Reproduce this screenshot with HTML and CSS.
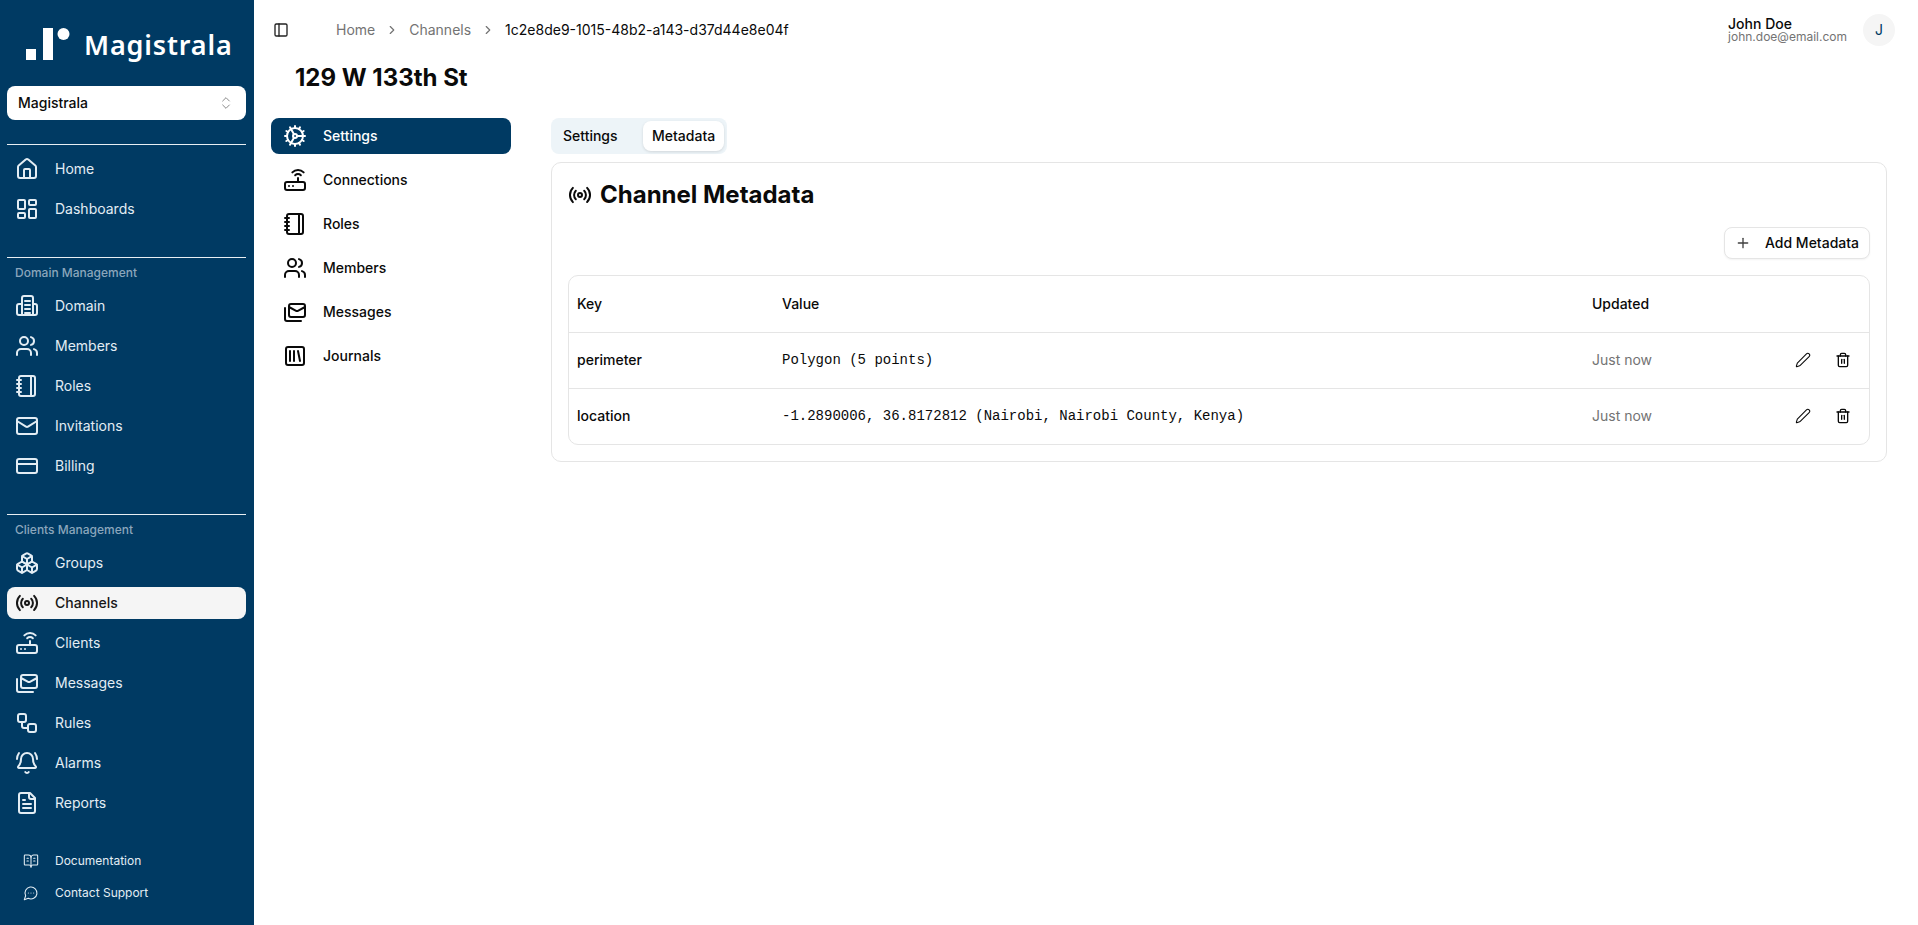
FILE: index.html
```html
<!DOCTYPE html>
<html lang="en">
<head>
<meta charset="utf-8">
<title>Magistrala</title>
<link rel="stylesheet" href="styles.css">
</head>
<body>
<svg class="sprite" aria-hidden="true">
  <symbol id="i-home" viewBox="0 0 24 24"><path d="M15 21v-8a1 1 0 0 0-1-1h-4a1 1 0 0 0-1 1v8"/><path d="M3 10a2 2 0 0 1 .709-1.528l7-5.999a2 2 0 0 1 2.582 0l7 5.999A2 2 0 0 1 21 10v9a2 2 0 0 1-2 2H5a2 2 0 0 1-2-2z"/></symbol>
  <symbol id="i-dash" viewBox="0 0 24 24"><rect width="7" height="9" x="3" y="3" rx="1"/><rect width="7" height="5" x="14" y="3" rx="1"/><rect width="7" height="9" x="14" y="12" rx="1"/><rect width="7" height="5" x="3" y="16" rx="1"/></symbol>
  <symbol id="i-domain" viewBox="0 0 24 24"><path d="M7 21V4a2 2 0 0 1 2-2h7a2 2 0 0 1 2 2v17"/><path d="M7 10H4a2 2 0 0 0-2 2v7a2 2 0 0 0 2 2h16a2 2 0 0 0 2-2v-7a2 2 0 0 0-2-2h-2"/><path d="M10 7h5M10 11h5M10 15h5M10 19h5"/></symbol>
  <symbol id="i-users" viewBox="0 0 24 24"><path d="M16 21v-2a4 4 0 0 0-4-4H6a4 4 0 0 0-4 4v2"/><circle cx="9" cy="7" r="4"/><path d="M22 21v-2a4 4 0 0 0-3-3.87"/><path d="M16 3.13a4 4 0 0 1 0 7.75"/></symbol>
  <symbol id="i-notebook" viewBox="0 0 24 24"><path d="M2 6h4"/><path d="M2 10h4"/><path d="M2 14h4"/><path d="M2 18h4"/><rect width="16" height="20" x="4" y="2" rx="2"/><path d="M16 2v20"/></symbol>
  <symbol id="i-mail" viewBox="0 0 24 24"><rect width="20" height="16" x="2" y="4" rx="2"/><path d="m22 7-8.97 5.7a1.94 1.94 0 0 1-2.06 0L2 7"/></symbol>
  <symbol id="i-card" viewBox="0 0 24 24"><rect width="20" height="14" x="2" y="5" rx="2"/><path d="M2 10h20"/></symbol>
  <symbol id="i-boxes" viewBox="0 0 24 24"><path d="M2.97 12.92A2 2 0 0 0 2 14.63v3.24a2 2 0 0 0 .97 1.71l3 1.8a2 2 0 0 0 2.06 0L12 19v-5.5l-5-3-4.03 2.42Z"/><path d="m7 16.5-4.74-2.85"/><path d="m7 16.5 5-3"/><path d="M7 16.5v5.17"/><path d="M12 13.5V19l3.97 2.38a2 2 0 0 0 2.06 0l3-1.8a2 2 0 0 0 .97-1.71v-3.24a2 2 0 0 0-.97-1.71L17 10.5l-5 3Z"/><path d="m17 16.5-5-3"/><path d="m17 16.5 4.74-2.85"/><path d="M17 16.5v5.17"/><path d="M7.97 4.42A2 2 0 0 0 7 6.13v4.37l5 3 5-3V6.13a2 2 0 0 0-.97-1.71l-3-1.8a2 2 0 0 0-2.06 0l-3 1.8Z"/><path d="M12 8 7.26 5.15"/><path d="m12 8 4.74-2.85"/><path d="M12 13.5V8"/></symbol>
  <symbol id="i-radio" viewBox="0 0 24 24"><path d="M4.9 19.1C1 15.2 1 8.8 4.9 4.9"/><path d="M7.8 16.2c-2.3-2.3-2.3-6.1 0-8.5"/><circle cx="12" cy="12" r="2"/><path d="M16.2 7.8c2.3 2.3 2.3 6.1 0 8.5"/><path d="M19.1 4.9C23 8.8 23 15.1 19.1 19"/></symbol>
  <symbol id="i-router" viewBox="0 0 24 24"><rect width="20" height="8" x="2" y="14" rx="2"/><path d="M6.01 18H6"/><path d="M10.01 18H10"/><path d="M15 10v4"/><path d="M17.84 7.17a4 4 0 0 0-5.66 0"/><path d="M20.66 4.34a8 8 0 0 0-11.31 0"/></symbol>
  <symbol id="i-mails" viewBox="0 0 24 24"><rect width="16" height="13" x="6" y="4" rx="2"/><path d="m22 7-7.1 3.78c-.57.3-1.23.3-1.8 0L6 7"/><path d="M2 8v11c0 1.1.9 2 2 2h14"/></symbol>
  <symbol id="i-flow" viewBox="0 0 24 24"><rect width="8" height="8" x="3" y="3" rx="2"/><path d="M7 11v4a2 2 0 0 0 2 2h4"/><rect width="8" height="8" x="13" y="13" rx="2"/></symbol>
  <symbol id="i-bell" viewBox="0 0 24 24"><path d="M10.268 21a2 2 0 0 0 3.464 0"/><path d="M22 8c0-2.3-.8-4.3-2-6"/><path d="M3.262 15.326A1 1 0 0 0 4 17h16a1 1 0 0 0 .74-1.673C19.41 13.956 18 12.499 18 8A6 6 0 0 0 6 8c0 4.499-1.411 5.956-2.738 7.326"/><path d="M4 2C2.8 3.7 2 5.7 2 8"/></symbol>
  <symbol id="i-file" viewBox="0 0 24 24"><path d="M15 2H6a2 2 0 0 0-2 2v16a2 2 0 0 0 2 2h12a2 2 0 0 0 2-2V7Z"/><path d="M14 2v4a2 2 0 0 0 2 2h4"/><path d="M10 9H8"/><path d="M16 13H8"/><path d="M16 17H8"/></symbol>
  <symbol id="i-book" viewBox="0 0 24 24"><path d="M12 7v14"/><path d="M16 12h2"/><path d="M16 8h2"/><path d="M3 18a1 1 0 0 1-1-1V4a1 1 0 0 1 1-1h5a4 4 0 0 1 4 4 4 4 0 0 1 4-4h5a1 1 0 0 1 1 1v13a1 1 0 0 1-1 1h-6a3 3 0 0 0-3 3 3 3 0 0 0-3-3z"/><path d="M6 12h2"/><path d="M6 8h2"/></symbol>
  <symbol id="i-chat" viewBox="0 0 24 24"><path d="M7.9 20A9 9 0 1 0 4 16.1L2 22Z"/><path d="M8 12h.01"/><path d="M12 12h.01"/><path d="M16 12h.01"/></symbol>
  <symbol id="i-cog" viewBox="0 0 24 24"><path d="M12 20a8 8 0 1 0 0-16 8 8 0 0 0 0 16Z"/><path d="M12 14a2 2 0 1 0 0-4 2 2 0 0 0 0 4Z"/><path d="M12 2v2"/><path d="M12 22v-2"/><path d="m17 20.66-1-1.73"/><path d="M11 10.27 7 3.34"/><path d="m20.66 17-1.73-1"/><path d="m3.34 7 1.73 1"/><path d="M14 12h8"/><path d="M2 12h2"/><path d="m20.66 7-1.73 1"/><path d="m3.34 17 1.73-1"/><path d="m17 3.34-1 1.73"/><path d="m11 13.73-4 6.93"/></symbol>
  <symbol id="i-lib" viewBox="0 0 24 24"><rect width="18" height="18" x="3" y="3" rx="2"/><path d="M7 7v10"/><path d="M11 7v10"/><path d="m15 7 2 10"/></symbol>
  <symbol id="i-panel" viewBox="0 0 24 24"><rect width="18" height="18" x="3" y="3" rx="2"/><path d="M9 3v18"/></symbol>
  <symbol id="i-chev" viewBox="0 0 24 24"><path d="m9 18 6-6-6-6"/></symbol>
  <symbol id="i-updown" viewBox="0 0 24 24"><path d="m7 15 5 5 5-5"/><path d="m7 9 5-5 5 5"/></symbol>
  <symbol id="i-plus" viewBox="0 0 24 24"><path d="M5 12h14"/><path d="M12 5v14"/></symbol>
  <symbol id="i-pencil" viewBox="0 0 24 24"><path d="M21.174 6.812a1 1 0 0 0-3.986-3.987L3.842 16.174a2 2 0 0 0-.5.83l-1.321 4.352a.5.5 0 0 0 .623.622l4.353-1.32a2 2 0 0 0 .83-.497z"/></symbol>
  <symbol id="i-trash" viewBox="0 0 24 24"><path d="M3 6h18"/><path d="M19 6v14c0 1-1 2-2 2H7c-1 0-2-1-2-2V6"/><path d="M8 6V4c0-1 1-2 2-2h4c1 0 2 1 2 2v2"/><path d="M10 11v6"/><path d="M14 11v6"/></symbol>
</svg>

<div class="app">
  <aside class="sidebar">
    <div class="logo">
      <svg class="logo-mark" viewBox="0 0 44 33"><rect x="0" y="21" width="10" height="11"/><rect x="17" y="0" width="10" height="32"/><circle cx="37.5" cy="6" r="6"/></svg>
      <span class="logo-text">Magistrala</span>
    </div>
    <div class="domain-select">
      <span>Magistrala</span>
      <svg class="ic ic-updown"><use href="#i-updown"/></svg>
    </div>
    <hr class="rule rule-first">
    <nav class="group">
      <a class="item"><svg class="ic"><use href="#i-home"/></svg>Home</a>
      <a class="item"><svg class="ic"><use href="#i-dash"/></svg>Dashboards</a>
    </nav>
    <hr class="rule rule-mid">
    <div class="label">Domain Management</div>
    <nav class="group">
      <a class="item"><svg class="ic"><use href="#i-domain"/></svg>Domain</a>
      <a class="item"><svg class="ic"><use href="#i-users"/></svg>Members</a>
      <a class="item"><svg class="ic"><use href="#i-notebook"/></svg>Roles</a>
      <a class="item"><svg class="ic"><use href="#i-mail"/></svg>Invitations</a>
      <a class="item"><svg class="ic"><use href="#i-card"/></svg>Billing</a>
    </nav>
    <hr class="rule rule-mid">
    <div class="label">Clients Management</div>
    <nav class="group">
      <a class="item"><svg class="ic"><use href="#i-boxes"/></svg>Groups</a>
      <a class="item active"><svg class="ic"><use href="#i-radio"/></svg>Channels</a>
      <a class="item"><svg class="ic"><use href="#i-router"/></svg>Clients</a>
      <a class="item"><svg class="ic"><use href="#i-mails"/></svg>Messages</a>
      <a class="item"><svg class="ic"><use href="#i-flow"/></svg>Rules</a>
      <a class="item"><svg class="ic"><use href="#i-bell"/></svg>Alarms</a>
      <a class="item"><svg class="ic"><use href="#i-file"/></svg>Reports</a>
    </nav>
    <nav class="foot">
      <a class="foot-item"><svg class="ic-sm"><use href="#i-book"/></svg>Documentation</a>
      <a class="foot-item"><svg class="ic-sm"><use href="#i-chat"/></svg>Contact Support</a>
    </nav>
  </aside>

  <div class="main">
    <header class="topbar">
      <svg class="ic-panel"><use href="#i-panel"/></svg>
      <ol class="crumbs">
        <li class="crumb-link">Home</li>
        <li class="crumb-sep"><svg class="ic-chev"><use href="#i-chev"/></svg></li>
        <li class="crumb-link">Channels</li>
        <li class="crumb-sep"><svg class="ic-chev"><use href="#i-chev"/></svg></li>
        <li class="crumb-now">1c2e8de9-1015-48b2-a143-d37d44e8e04f</li>
      </ol>
      <div class="user">
        <div class="user-text">
          <div class="user-name">John Doe</div>
          <div class="user-mail">john.doe@email.com</div>
        </div>
        <div class="avatar">J</div>
      </div>
    </header>
    <h1 class="page-title">129 W 133th St</h1>
    <div class="content">
      <nav class="subnav">
        <a class="sub-item sub-active"><svg class="ic"><use href="#i-cog"/></svg>Settings</a>
        <a class="sub-item"><svg class="ic"><use href="#i-router"/></svg>Connections</a>
        <a class="sub-item"><svg class="ic"><use href="#i-notebook"/></svg>Roles</a>
        <a class="sub-item"><svg class="ic"><use href="#i-users"/></svg>Members</a>
        <a class="sub-item"><svg class="ic"><use href="#i-mails"/></svg>Messages</a>
        <a class="sub-item"><svg class="ic"><use href="#i-lib"/></svg>Journals</a>
      </nav>
      <section class="panel">
        <div class="tabs">
          <span class="tab tab-first">Settings</span>
          <span class="tab tab-on">Metadata</span>
        </div>
        <div class="card">
          <h2 class="card-title"><svg class="ic"><use href="#i-radio"/></svg>Channel Metadata</h2>
          <div class="card-actions">
            <button class="add-btn"><svg class="ic-plus"><use href="#i-plus"/></svg>Add Metadata</button>
          </div>
          <table class="meta">
            <thead>
              <tr><th class="c-key">Key</th><th class="c-val">Value</th><th class="c-upd">Updated</th><th class="c-act"></th></tr>
            </thead>
            <tbody>
              <tr>
                <td class="k">perimeter</td><td class="v">Polygon (5 points)</td><td class="u">Just now</td>
                <td class="a"><span class="acts"><svg class="ic-act ic-pen"><use href="#i-pencil"/></svg><svg class="ic-act"><use href="#i-trash"/></svg></span></td>
              </tr>
              <tr>
                <td class="k">location</td><td class="v">-1.2890006, 36.8172812 (Nairobi, Nairobi County, Kenya)</td><td class="u">Just now</td>
                <td class="a"><span class="acts"><svg class="ic-act ic-pen"><use href="#i-pencil"/></svg><svg class="ic-act"><use href="#i-trash"/></svg></span></td>
              </tr>
            </tbody>
          </table>
        </div>
      </section>
    </div>
  </div>
</div>
</body>
</html>
```
FILE: styles.css
```css
* { box-sizing: border-box; }
html, body { margin: 0; height: 100%; }
body { font-family: Inter, "Liberation Sans", sans-serif; font-size: 14px; line-height: 20px; color: #0a0a0a; background: #fff; overflow: hidden; }
.sprite { position: absolute; width: 0; height: 0; overflow: hidden; }
.ic, .ic-sm, .ic-panel, .ic-chev, .ic-plus, .ic-act {
  fill: none; stroke: currentColor; stroke-width: 2; stroke-linecap: round; stroke-linejoin: round; flex: none;
}
.ic { width: 24px; height: 24px; }

.app { display: flex; height: 925px; }

.sidebar { width: 254px; flex: none; background: #003a63; color: #e8f0f6; padding: 0 8px 0 7px; display: flex; flex-direction: column; }
.logo { display: flex; align-items: center; height: 86px; padding: 28px 0 25px 19px; gap: 14px; flex: none; }
.logo-mark { width: 44px; height: 33px; fill: #fff; flex: none; }
.logo-text { font-family: "Noto Sans", sans-serif; font-weight: 600; font-size: 27px; letter-spacing: .85px; color: #fff; line-height: 33px; }
.domain-select { height: 34px; background: #fff; border-radius: 8px; color: #0a0a0a; display: flex; align-items: center; justify-content: space-between; padding: 0 12px 0 11px; font-weight: 500; flex: none; }
.ic-updown { width: 16px; height: 16px; color: #8a8a8a; stroke-width: 1.5; }
.rule { border: 0; height: 1px; background: #e8eef3; margin: 0; flex: none; }
.rule-first { margin-top: 24px; margin-bottom: 8px; }
.rule-mid { margin-top: 32px; }
.group { display: flex; flex-direction: column; gap: 8px; flex: none; }
.label { height: 32px; line-height: 30px; padding-left: 8px; font-size: 12px; font-weight: 500; color: #8ba6bc; flex: none; }
.item { height: 32px; display: flex; align-items: center; gap: 16px; padding-left: 8px; border-radius: 8px; font-size: 14px; color: #e3edf4; }
.item.active { background: #f5f5f5; color: #171717; font-weight: 500; }
.foot { margin-top: auto; padding-bottom: 19px; display: flex; flex-direction: column; gap: 6px; }
.foot-item { height: 26px; display: flex; align-items: center; gap: 16px; padding-left: 16px; font-size: 12px; line-height: 16px; color: #e3edf4; }
.ic-sm { width: 16px; height: 16px; stroke-width: 1.6; }

.main { flex: 1; min-width: 0; display: flex; flex-direction: column; }
.topbar { height: 60px; flex: none; display: flex; align-items: center; padding: 0 23px 0 19px; }
.ic-panel { width: 16px; height: 16px; color: #222; }
.crumbs { list-style: none; margin: 0 0 0 47px; padding: 0; display: flex; align-items: center; gap: 10px; font-size: 14px; }
.crumb-link { color: #737373; }
.crumb-sep { display: flex; color: #737373; }
.ic-chev { width: 14px; height: 14px; }
.crumb-now { color: #0a0a0a; }
.user { margin-left: auto; display: flex; align-items: center; gap: 16px; }
.user-name { font-size: 14px; line-height: 14px; font-weight: 500; }
.user-mail { font-size: 12px; line-height: 12px; color: #737373; }
.avatar { width: 32px; height: 32px; border-radius: 50%; background: #f5f5f5; display: flex; align-items: center; justify-content: center; font-size: 14px; color: #003a63; }
.page-title { margin: 0; font-size: 24px; line-height: 36px; font-weight: 700; padding-left: 41px; flex: none; }
.content { display: flex; margin-top: 22px; padding: 0 31px 0 17px; gap: 40px; }
.subnav { width: 240px; flex: none; display: flex; flex-direction: column; gap: 8px; }
.sub-item { height: 36px; display: flex; align-items: center; gap: 16px; padding-left: 12px; border-radius: 8px; font-size: 14px; font-weight: 500; }
.sub-active { background: #003a63; color: #fff; }
.panel { flex: 1; min-width: 0; }
.tabs { display: inline-flex; height: 36px; background: #edf4f8; border-radius: 8px; padding: 3px; gap: 4px; font-weight: 500; vertical-align: top; }
.tab { height: 30px; line-height: 30px; padding: 0 9px; border-radius: 8px; display: block; }
.tab-first { width: 85px; }
.tab-on { background: #fff; box-shadow: 0 1px 3px rgba(0,0,0,.12); }
.card { margin-top: 8px; border: 1px solid #e5e5e5; border-radius: 10px; padding: 14px 16px 16px; }
.card-title { margin: 0; display: flex; align-items: center; gap: 8px; height: 36px; font-size: 24px; line-height: 32px; font-weight: 700; }
.card-actions { display: flex; justify-content: flex-end; margin-top: 14px; margin-bottom: 16px; }
.add-btn { height: 32px; width: 146px; background: #fff; border: 1px solid #e5e5e5; border-radius: 8px; display: flex; align-items: center; gap: 14px; padding: 0 0 0 10px; font: 500 14px/20px Inter, sans-serif; color: #0a0a0a; box-shadow: 0 1px 2px rgba(0,0,0,.05); }
.ic-plus { width: 16px; height: 16px; color: #404040; }
.meta { width: 100%; border-collapse: separate; border-spacing: 0; border: 1px solid #e5e5e5; border-radius: 10px; table-layout: fixed; }
.meta th { height: 56px; text-align: left; font-weight: 500; padding: 0 8px; }
.meta td { height: 56px; padding: 0 8px 1px; border-top: 1px solid #e5e5e5; }
.c-key { width: 205px; }
.c-val { width: 810px; }
.c-upd { width: 150px; }
.k { font-weight: 500; }
.v { font-family: "Liberation Mono", monospace; }
.u { color: #737373; }
.acts { display: flex; justify-content: flex-end; gap: 24px; padding-right: 10px; }
.ic-act { width: 16px; height: 16px; }
.ic-pen { stroke-width: 1.6; }
```
